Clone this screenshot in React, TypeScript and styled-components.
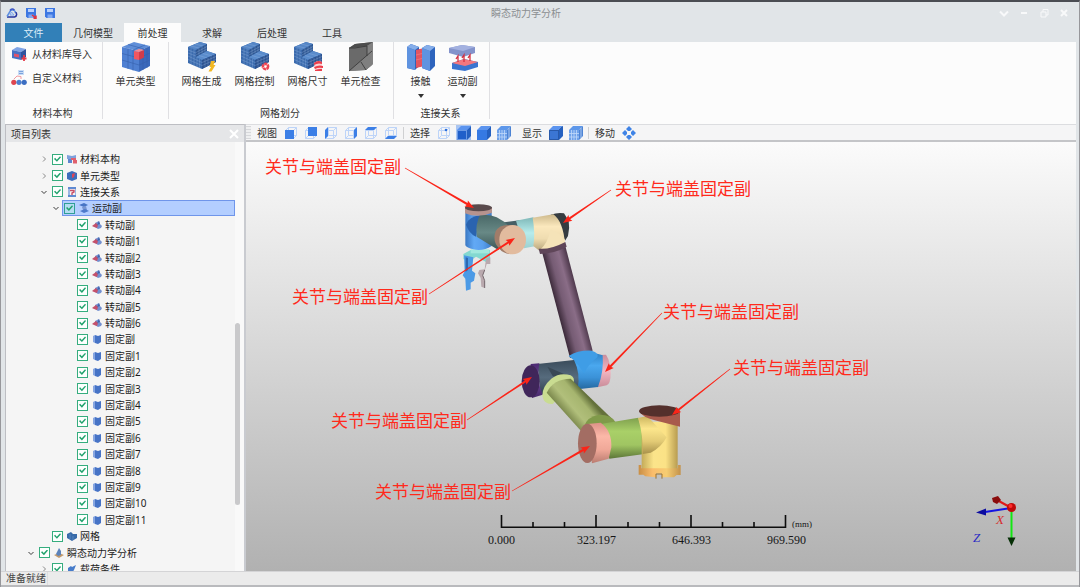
import React from "react";
import styled, { createGlobalStyle, css } from "styled-components";

const GlobalStyle = createGlobalStyle`
  * { box-sizing: border-box; }
  html, body, #root { height: 100%; margin: 0; }
  body {
    font-family: "Noto Sans", "Noto Sans CJK SC", sans-serif;
    font-size: 10px;
    line-height: 12px;
    color: #333;
    overflow: hidden;
  }
  button {
    font: inherit;
    color: inherit;
    border: 0;
    padding: 0;
    background: none;
  }
`;

const Window = styled.div`
  display: flex;
  flex-direction: column;
  height: 100%;
  background: #e1e5e8;
  border-top: 2px solid #4b4d53;
  border-left: 1px solid #97979b;
  border-right: 1px solid #97979b;
`;

const TitleBar = styled.header`
  display: grid;
  grid-template-columns: 1fr auto 1fr;
  align-items: center;
  height: 21px;
  padding: 0 5px;
`;

const QuickActions = styled.div`
  display: flex;
  gap: 7px;
`;

const WindowTitle = styled.h1`
  margin: 0 0 0 -28px;
  font-size: 10px;
  font-weight: 400;
  color: #8b8e91;
`;

const WindowControls = styled.div`
  display: flex;
  justify-content: flex-end;
`;

const IconButton = styled.button<{ $width?: number }>`
  display: grid;
  place-items: center;
  width: ${(p) => p.$width ?? 12}px;
  height: 12px;
`;

const Tabs = styled.nav`
  display: flex;
  gap: 2px;
  height: 19px;
  padding: 0 4px;
`;

const Tab = styled.button<{ $kind?: "file" | "active" }>`
  width: ${(p) => (p.$kind ? 57 : 58)}px;
  ${(p) => p.$kind === "file" && css`background: #3280b8; color: #dcecf7;`}
  ${(p) => p.$kind === "active" && css`background: #fcfcfc;`}
`;

const Ribbon = styled.section`
  display: flex;
  height: 82px;
  margin: 0 3px 0 4px;
  background: #fcfcfc;
`;

const Group = styled.div<{ $width: number }>`
  display: flex;
  flex-direction: column;
  width: ${(p) => p.$width}px;
  height: 77px;
  border-right: 1px solid #e0e0e3;
`;

const GroupTools = styled.div<{ $stacked?: boolean }>`
  display: flex;
  flex: 1;
  justify-content: center;
  align-items: flex-start;
  ${(p) => p.$stacked && css`
    flex-direction: column;
    justify-content: flex-start;
    padding-left: 6px;
  `}
`;

const GroupName = styled.div`
  padding-right: 2px;
  text-align: center;
`;

const SmallTool = styled.button`
  display: flex;
  align-items: center;
  gap: 5px;
  height: 24px;
`;

const BigTool = styled.button<{ $narrow?: boolean }>`
  display: flex;
  flex-direction: column;
  align-items: center;
  gap: 3px;
  width: ${(p) => (p.$narrow ? 42 : 53)}px;
`;

const DropArrow = styled.span`
  margin-top: 4px;
  border: 3px solid transparent;
  border-top: 4px solid #333;
  border-bottom: 0;
`;

const Main = styled.main`
  display: flex;
  flex: 1;
  min-height: 0;
  margin: 0 3px 0 4px;
`;

const Sidebar = styled.aside`
  display: flex;
  flex-direction: column;
  width: 241px;
  border: 1px solid #bdbec3;
  border-bottom: 0;
  border-right: 2px solid #c9cbd0;
  background: #f5f5f5;
`;

const SidebarHeader = styled.div`
  display: flex;
  justify-content: space-between;
  align-items: center;
  height: 17px;
  padding: 0 4px 0 5px;
  background: #e5e6e8;
`;

const TreeArea = styled.div`
  display: flex;
  flex: 1;
  min-height: 0;
  overflow: hidden;
`;

const Tree = styled.ul`
  display: flex;
  flex: 1;
  flex-direction: column;
  margin: 9px 0 -6px;
  padding: 0;
  list-style: none;
`;

const indents = [20, 33, 45, 58];

const TreeRow = styled.li<{ $level: number }>`
  display: flex;
  flex: 1;
  align-items: center;
  gap: 3px;
  min-height: 16px;
  padding-left: ${(p) => indents[p.$level]}px;
`;

const Twisty = styled.button`
  display: grid;
  place-items: center;
  width: 8px;
  height: 10px;
`;

const Check = styled.input`
  appearance: none;
  display: grid;
  place-items: center;
  flex: none;
  width: 11px;
  height: 11px;
  margin: 0 4px 0 0;
  border: 1px solid #35ad7e;
  background: #fdfffe;
  &:checked::after {
    content: "";
    width: 7px;
    height: 6px;
    background: #21a26d;
    clip-path: polygon(0 45%, 16% 28%, 40% 58%, 86% 0, 100% 16%, 42% 94%);
  }
`;

const TreeLabel = styled.label<{ $selected?: boolean }>`
  display: flex;
  flex: 1;
  align-items: center;
  height: 16px;
  padding-left: 1px;
  border: 1px solid transparent;
  color: #1c1c1c;
  svg { margin-right: 3px; }
  ${(p) => p.$selected && css`
    background: #b3ceff;
    border-color: #6f95ea;
    ${Check} { background: #b4dcf2; border-color: #2f9f96; }
  `}
`;

const ScrollTrack = styled.div`
  display: flex;
  flex-direction: column;
  width: 9px;
  background: #f9f9f9;
`;

const TrackSpace = styled.div<{ $share: number }>`
  flex: ${(p) => p.$share};
`;

const ScrollThumb = styled.div`
  flex: 182;
  width: 5px;
  border-radius: 3px;
  background: #c9c9cb;
`;

const Workspace = styled.section`
  display: flex;
  flex: 1;
  flex-direction: column;
  min-width: 0;
`;

const ViewToolbar = styled.div`
  display: flex;
  align-items: center;
  height: 18px;
  background: #f5f5f6;
  border-top: 1px solid #dcdde0;
  border-bottom: 2px solid #c4c5c8;
`;

const Grip = styled.span`
  width: 5px;
  height: 13px;
  margin-right: 6px;
  background: repeating-linear-gradient(#d6d7da 0 1px, #eeeff0 1px 3px);
`;

const ToolCaption = styled.span`
  margin-right: 6px;
`;

const ToolSet = styled.div<{ $after: number }>`
  display: flex;
  gap: 5px;
  margin-right: ${(p) => p.$after}px;
`;

const ViewButton = styled.button<{ $on?: boolean }>`
  display: grid;
  place-items: center;
  width: 15px;
  height: 15px;
  ${(p) => p.$on && css`background: #a9c5f2;`}
`;

const Divider = styled.span`
  width: 1px;
  height: 12px;
  margin-right: 6px;
  background: #cfd0d2;
`;

const Canvas = styled.div`
  flex: 1;
  min-height: 0;
  background: linear-gradient(#fbfbfb, #b1b1b1);
  svg { display: block; width: 100%; height: 100%; }
`;

const StatusBar = styled.footer`
  display: flex;
  height: 16px;
  padding: 0 5px;
  background: #ebebeb;
  border-top: 1px solid #d4d4d6;
  border-bottom: 2px solid #b9babd;
`;

const StatusText = styled.span`
  padding-right: 1px;
  border-right: 1px solid #dcdcde;
  color: #444;
  line-height: 13px;
`;

/* ---------- title bar icons ---------- */

const AppLogo = () => (
  <svg width="12" height="12" viewBox="0 0 12 12" fill="none" strokeWidth="1.5">
    <path d="M1 10H8.5A2.6 2.6 0 0 0 9 5" stroke="#25349f" />
    <path d="M1 9.5L4 4.5A3 3 0 0 1 9.5 5.5" stroke="#5d8fe0" />
    <path d="M4 8L5.5 5L8 8Z" stroke="#7aa6ee" strokeWidth="1" />
    <path d="M4 3.5Q6 .8 8.5 3.2" stroke="#3b55c4" />
  </svg>
);

const Disk = ({ mark }: { mark?: boolean }) => (
  <svg width="12" height="12" viewBox="0 0 12 12">
    <path d="M1 1H11V11H2.5L1 9.5Z" fill="#3d77e2" />
    <path d="M3 2H9V5H3Z" fill="#b9d1fa" />
    <path d="M3.5 7.5H8.5V11H3.5Z" fill="#7fa8f2" />
    {mark && <path d="M7 8L11 11M11 8.5V11.3H8.5" stroke="#e03440" strokeWidth="1.5" fill="none" />}
  </svg>
);

const controlPaths = [
  ["展开", "M1 3.5L5 7.5L9 3.5"],
  ["最小化", "M2 5H8"],
  ["还原", "M2 4H7V9H2ZM4 4V1.5H9V7H7"],
  ["关闭", "M2 2L8 8M8 2L2 8"],
];

const StrokeIcon = ({ d, color, width = 2 }: { d: string; color: string; width?: number }) => (
  <svg width="10" height="10" viewBox="0 0 10 10">
    <path d={d} fill="none" stroke={color} strokeWidth={width} />
  </svg>
);

/* ---------- ribbon icons ---------- */

const LibraryIcon = () => (
  <svg width="16" height="16" viewBox="0 0 16 16">
    <path d="M1 4L6 1L15 3L10 6Z" fill="#7fa4e6" />
    <path d="M1 4L10 6V14L1 12Z" fill="#4670c4" />
    <path d="M10 6L15 3V11L10 14Z" fill="#2f539f" />
    <path d="M3 7.5L8 8.5V11.5L3 10.5Z" fill="#e0526a" />
    <path d="M13 9V15M10.5 12.5H15.5" stroke="#e53c4b" strokeWidth="1.8" />
  </svg>
);

const CustomMaterialIcon = () => (
  <svg width="16" height="16" viewBox="0 0 16 16">
    <path d="M7 0H13V5H7Z" fill="#c9dcf5" />
    <path d="M8 1.5H12M8 3.5H12" stroke="#7ba3dd" />
    <path d="M3 9L6 6L10 6.5V9" stroke="#f09aa0" fill="none" />
    <circle cx="2.800" cy="12.300" r="2.600" fill="#de4650" />
    <circle cx="8" cy="12.300" r="2.600" fill="#4d80cf" />
    <circle cx="13.200" cy="12.300" r="2.600" fill="#3c6ec2" />
  </svg>
);

const ElementTypeIcon = () => (
  <svg width="30" height="30" viewBox="0 0 30 30">
    <path d="M1 5L13 0L29 4L18 9Z" fill="#5f8ed8" />
    <path d="M1 5L18 9V30L1 25Z" fill="#4f80d2" />
    <path d="M18 9L29 4V24L18 30Z" fill="#3b69bb" />
    <path d="M7 6.500V27M12 8V28.500M1 11.500L18 16M1 18L18 23M22 7V28M26 5.500V26M18 16L29 11M18 23L29 18M7 2.500L23 7M12 8L24 3" stroke="#3660ab" strokeWidth=".6" fill="none" />
    <path d="M13 9L18 10V18L13 17Z" fill="#f2565f" />
    <path d="M18 10L23 8V15.500L18 18Z" fill="#d23c4a" />
    <path d="M13 9L18 7L23 8L18 10Z" fill="#f78a90" />
  </svg>
);

const MeshIcon = ({ badge }: { badge: "bolt" | "gear" | "size" }) => (
  <svg width="30" height="30" viewBox="0 0 30 30">
    <path d="M1 5L13 0L20 2V9L29 12V20L15 27L1 21Z" fill="#3a6aad" />
    <path d="M1 5L13 0L20 2L9 8Z" fill="#5586c6" />
    <path d="M9 8L20 2V9L9 15Z" fill="#2e5793" />
    <path d="M9 15L20 9L29 12L15 18Z" fill="#5a8ccc" />
    <path d="M15 18L29 12V20L15 27Z" fill="#2b5290" />
    <path d="M4 6V22M7 7V24M10 15V25M12.500 17V26M1 8L9 11M1 11L9 14M1 14L15 20.500M1 17.500L15 23.500M18 17V25.500M21 16V24M24 14.500V22.500M27 13V21M15 20.500L29 14.500M15 23.500L29 17.500M12 6.500V13M15 5V11.500M18 3.500V10M9 10.500L20 4.500M9 13L20 7M4 4L12 6M8 2L16 4M12 13.500L20 16M16 11.500L25 14" stroke="#9dbce6" strokeWidth=".5" fill="none" opacity=".6" />
    {badge === "bolt" && <path d="M24 19H28L26.500 23H28.500L24.500 29.500H21.500L24 25H22.500Z" fill="#f2b824" />}
    {badge === "gear" && <circle cx="25.500" cy="24.500" r="2.600" fill="#fff" stroke="#ee4552" strokeWidth="2.600" strokeDasharray="3 .5" />}
    {badge === "size" && (
      <>
        <path d="M21 21Q25 17.500 29 20V29H22Z" fill="#fbd3d5" />
        <path d="M21 21Q25 17.500 29 20V22Q25 20.500 21 23ZM21 25Q26 22.500 30 24V26Q25 25 22 27ZM22 28Q26 26.500 29 27V29H22Z" fill="#ec3f4c" />
      </>
    )}
  </svg>
);

const ElementCheckIcon = () => (
  <svg width="30" height="30" viewBox="0 0 30 30">
    <path d="M3 6L9 2L27 0V22L20 28L3 29Z" fill="#6a6a6a" />
    <path d="M3 6L21 4L27 0L9 2Z" fill="#4d4d4d" />
    <path d="M21 4L27 0V22L21 27Z" fill="#828282" />
    <path d="M3 29L24 11L26 23L20 28Z" fill="#7f7f7f" />
    <path d="M3 29L26 9M15 20L20 28M3 6H9L21 4V14" stroke="#3b3b3b" fill="none" strokeWidth=".9" />
  </svg>
);

const ContactIcon = () => (
  <svg width="30" height="30" viewBox="0 0 30 30">
    <path d="M1 5L5 2L13 5V24L9 28L1 26Z" fill="#2e64bd" />
    <path d="M1 5L9 8V28L1 26Z" fill="#5f93e0" />
    <path d="M1 5L5 2L13 5L9 8Z" fill="#86aeea" />
    <path d="M10 8L18 6V24L10 26Z" fill="#d94150" />
    <path d="M11 8V25M13 8V25M15 7V24M10 13L18 11M10 18L18 16" stroke="#f27d83" strokeWidth=".7" />
    <path d="M16 6L21 3L29 5V24L24 29L16 26Z" fill="#2e64bd" />
    <path d="M16 6L24 9V29L16 26Z" fill="#5f93e0" />
    <path d="M16 6L21 3L29 5L24 9Z" fill="#86aeea" />
  </svg>
);

const JointIcon = () => (
  <svg width="30" height="30" viewBox="0 0 30 30">
    <path d="M1 6L14 3L27 5V11L15 15L1 11Z" fill="#8493cb" />
    <path d="M1 6L14 3L27 5L15 9Z" fill="#a3b1e0" />
    <path d="M4 21L16 17L30 20V25L17 29L4 27Z" fill="#3a74d0" />
    <path d="M4 21L16 17L30 20L17 24Z" fill="#f2777e" />
    <path d="M10 20V14L8 17M16 20V13L14 16M22 19V13L20 16" stroke="#d53040" strokeWidth="1.300" fill="none" />
  </svg>
);

/* ---------- tree icons ---------- */

type TreeIconKind = "material" | "element" | "link" | "joint" | "rotate" | "fixed" | "mesh" | "analysis" | "load";

const treeIcons: Record<TreeIconKind, React.ReactNode> = {
  material: <><path d="M0 1L5 2L9 1V5H0Z" fill="#7ea1dc" /><path d="M1 5H5V9H1Z" fill="#5d86cf" /><path d="M4 4H9V6H4ZM6 6H10V9.500H6Z" fill="#e0606e" /></>,
  element: <><path d="M0 2L5 0L10 2V8L5 10L0 8Z" fill="#3e6dbb" /><path d="M5 3L8 2L7 6L5 7Z" fill="#de4556" /></>,
  link: <><path d="M1 0H9V2H1ZM1 8H9V10H1Z" fill="#5f8ad2" /><path d="M1 2H3V8H1ZM8 2H9V8H8Z" fill="#9db7e2" /><path d="M3 3.500H7V5L5 6V8" stroke="#c85069" strokeWidth="1.400" fill="none" /></>,
  joint: <><path d="M0 2L5 0L9 2L5 4Z" fill="#4674c5" /><path d="M3 4L7 3L8 7H4Z" fill="#7895d0" /><path d="M1 8L6 6L10 8L5 10Z" fill="#4d7acb" /></>,
  rotate: <><path d="M3 3L7 1L8 4L10 6L9 8L6 9L3 7Z" fill="#7390d0" /><path d="M0 6L4 3L6 5L5 8L2 7Z" fill="#c4506b" /><path d="M7 1L8 4L5 5Z" fill="#3f63ad" /></>,
  fixed: <><path d="M1 2L3 1V9L1 8Z" fill="#87a6e1" /><path d="M3 1L6 2L9 1V8L6 10L3 9Z" fill="#4673c6" /></>,
  mesh: <><path d="M0 3L4 1L6 3L10 3V7L5 10L0 7Z" fill="#386aa9" /><path d="M3 3V8M6 5V9" stroke="#6a98d1" strokeWidth=".6" /></>,
  analysis: <><path d="M0 7L5 5L10 7L5 10Z" fill="#c29a6b" /><path d="M2 6L5 0L7 3V7L4 8Z" fill="#5c83bb" /></>,
  load: <path d="M1 4L4 2L5 3L9 1L7 6L5 9L1 10Z" fill="#477cca" />,
};

const TreeIcon = ({ kind }: { kind: TreeIconKind }) => (
  <svg width="10" height="10" viewBox="0 0 10 10">{treeIcons[kind]}</svg>
);

interface Node { level: number; text: string; icon: TreeIconKind; open?: boolean; selected?: boolean }

const nodes: Node[] = [
  { level: 1, text: "材料本构", icon: "material", open: false },
  { level: 1, text: "单元类型", icon: "element", open: false },
  { level: 1, text: "连接关系", icon: "link", open: true },
  { level: 2, text: "运动副", icon: "joint", open: true, selected: true },
  ...["", "1", "2", "3", "4", "5", "6"].map((n): Node => ({ level: 3, text: `转动副${n}`, icon: "rotate" })),
  ...["", "1", "2", "3", "4", "5", "6", "7", "8", "9", "10", "11"].map((n): Node => ({ level: 3, text: `固定副${n}`, icon: "fixed" })),
  { level: 1, text: "网格", icon: "mesh" },
  { level: 0, text: "瞬态动力学分析", icon: "analysis", open: true },
  { level: 1, text: "载荷条件", icon: "load", open: false },
];

/* ---------- view toolbar icons ---------- */

const faces: Record<string, string> = {
  前视: "M1 4H10V13H1Z",
  后视: "M4 1H13V10H4Z",
  左视: "M1 4L4 1V10L1 13Z",
  右视: "M10 4L13 1V10L10 13Z",
  俯视: "M1 4L4 1H13L10 4Z",
  仰视: "M1 13L4 10H13L10 13Z",
};

const WireCube = ({ face, dot }: { face?: string; dot?: boolean }) => (
  <svg width="14" height="14" viewBox="0 0 14 14">
    <path d="M1.500 4.500H9.500V12.500H1.500ZM4.500 1.500H12.500V9.500H4.500ZM1.500 4.500L4.500 1.500M9.500 4.500L12.500 1.500M9.500 12.500L12.500 9.500M1.500 12.500L4.500 9.500" fill="none" stroke="#bdd4f8" />
    {face && <path d={face} fill="#3c7fe6" />}
    {dot && <circle cx="9" cy="4" r="1.300" fill="#2d6fdc" />}
  </svg>
);

const SolidCube = ({ grid, dashed, edged }: { grid?: boolean; dashed?: boolean; edged?: boolean }) => (
  <svg width="14" height="14" viewBox="0 0 14 14">
    <path d="M0 4L4 0H14L10 4Z" fill={grid ? "#5d97ea" : "#5b94ef"} />
    <path d="M0 4H10V14H0Z" fill={grid ? "#6ea1ea" : dashed ? "#1f5fca" : edged ? "#3b76d4" : "#3579e3"} />
    <path d="M10 4L14 0V10L10 14Z" fill={grid ? "#4c83d4" : "#2460c0"} />
    {grid && <path d="M2.500 4V14M5 4V14M7.500 4V14M0 7.500H10M0 11H10M12 2V12" stroke="#c2d9fa" strokeWidth=".8" />}
    {dashed && <path d="M.5 4.500H9.500V13.500H.5Z" fill="none" stroke="#b5d2ff" strokeDasharray="1 1" />}
    {edged && <path d="M.5 4.500H9.500V13.500H.5ZM9.500 4.500L13.500 .5" fill="none" stroke="#2553a0" strokeWidth=".8" />}
  </svg>
);

const MoveIcon = () => (
  <svg width="14" height="14" viewBox="0 0 14 14" fill="#3f83e6">
    <path d="M7 0L10 3L8 5H6L4 3ZM7 14L10 11L8 9H6L4 11ZM0 7L3 4L5 6V8L3 10ZM14 7L11 4L9 6V8L11 10Z" />
  </svg>
);

/* ---------- scene ---------- */

const notes = [
  { x: 265, y: 173, from: [405, 168], to: [474, 208] },
  { x: 615, y: 195, from: [611, 190], to: [563, 223] },
  { x: 292, y: 303, from: [429, 294], to: [515, 238] },
  { x: 663, y: 318, from: [662, 313], to: [605, 372] },
  { x: 733, y: 374, from: [730, 369], to: [672, 415] },
  { x: 331, y: 427, from: [467, 420], to: [532, 377] },
  { x: 375, y: 498, from: [512, 491], to: [590, 446] },
];

const taperedArrow = ([x1, y1]: number[], [x2, y2]: number[]) => {
  const len = Math.hypot(x2 - x1, y2 - y1);
  const ux = (x2 - x1) / len;
  const uy = (y2 - y1) / len;
  const at = (back: number, side: number) =>
    `${(x2 - ux * back - uy * side).toFixed(1)},${(y2 - uy * back + ux * side).toFixed(1)}`;
  return [at(len, 0.3), at(8, 1), at(9, 3.4), at(0, 0), at(9, -3.4), at(8, -1), at(len, -0.3)].join(" ");
};

const Shade = ({ id, stops, x2 = 1, y2 = 0 }: { id: string; stops: string[]; x2?: number; y2?: number }) => (
  <linearGradient id={id} x1="0" y1="0" x2={x2} y2={y2}>
    {stops.map((c, i) => <stop key={i} offset={i / (stops.length - 1)} stopColor={c} />)}
  </linearGradient>
);

const Robot = () => (
  <>
    <defs>
      <Shade id="blueV" stops={["#3a78c4", "#62a9f5", "#5aa0ee", "#3d7cc8"]} />
      <Shade id="teal" stops={["#496867", "#688986", "#3c5656"]} x2={0} y2={1} />
      <Shade id="cyan" stops={["#7fb8b8", "#b7ecec", "#9dd0d0"]} x2={0} y2={1} />
      <Shade id="cream" stops={["#cdb98c", "#fbe8bd", "#efdcb0", "#b8a67c"]} x2={0} y2={1} />
      <linearGradient id="plum" gradientUnits="userSpaceOnUse" x1="275" y1="182" x2="345" y2="163">
        <stop offset="0" stopColor="#3f2d3d" /><stop offset=".3" stopColor="#765c74" />
        <stop offset=".65" stopColor="#8a6d87" /><stop offset="1" stopColor="#4b3649" />
      </linearGradient>
      <Shade id="sky" stops={["#2f83c8", "#4aa8ef", "#3b92d8", "#24679f"]} x2={0} y2={1} />
      <Shade id="slate" stops={["#3a4c5b", "#566b7d", "#33424f"]} x2={0} y2={1} />
      <linearGradient id="olive" gradientUnits="userSpaceOnUse" x1="150" y1="515" x2="220" y2="455">
        <stop offset="0" stopColor="#6f7c42" /><stop offset=".4" stopColor="#b1bf7b" />
        <stop offset=".75" stopColor="#a6b56f" /><stop offset="1" stopColor="#64713b" />
      </linearGradient>
      <Shade id="green" stops={["#7f9f4e", "#a9d068", "#a0c562", "#5c7638"]} x2={0} y2={1} />
      <Shade id="yellow" stops={["#c4ab59", "#fbe48a", "#fbe286", "#b89c50"]} />
      <Shade id="yellowH" stops={["#cbb55f", "#fce68c", "#e3cb75", "#a8914b"]} x2={0} y2={1} />
      <Shade id="orange" stops={["#c88e45", "#fbbd6c", "#f6cd72", "#c3924b"]} />
      <Shade id="pink" stops={["#dc9187", "#fcb8a8", "#f0a898", "#b97b70"]} x2={0} y2={1} />
      <Shade id="rose" stops={["#c98d9c", "#f2b6c2", "#c98c99"]} x2={0} y2={1} />
      <Shade id="violet" stops={["#4c2a72", "#704799", "#452768"]} x2={0} y2={1} />
    </defs>

    {/* forearm, wrist and gripper */}
    <g transform="translate(450 190) scale(.33333)">
      <path d="M40 192L62 180H120V205L108 216L78 200L70 206L40 208Z" fill="#83d8d0" />
      <path d="M62 178H118V190H62Z" fill="#a2e8de" />
      <path d="M42 196L70 202L66 242L76 250L72 272L62 278V298L48 302L46 266L38 256L44 244Z" fill="#4c9ae6" />
      <path d="M47 202L54 204V240L47 246Z" fill="#2d68b0" />
      <path d="M108 206L121 202V222H110L104 242L98 256L104 272V294L94 290L92 264L84 250L88 240L104 238Z" fill="#b9a9ae" />
      <path d="M104 240L98 256L104 272V294" stroke="#74686d" strokeWidth="3" fill="none" />
      <path d="M46 65H125V168Q100 184 70 178Q50 174 46 166Z" fill="url(#blueV)" />
      <path d="M48 104Q55 80 92 75L78 140Q58 132 48 104Z" fill="#2a63af" />
      <path d="M90 75Q120 72 140 82L180 106L145 180L80 140Q76 100 90 75Z" fill="url(#teal)" />
      <path d="M45 52V70Q85 86 126 68V52Z" fill="#b6938e" />
      <ellipse cx="85.500" cy="53" rx="40.500" ry="10.500" fill="#594a4c" />
      <path d="M163 97L215 90V108L182 112Z" fill="#465f65" />
      <path d="M198 92L250 82L262 167L222 175Z" fill="url(#cyan)" />
      <path d="M302 74Q325 66 342 70L356 92Q360 115 354 138L345 152Q330 108 302 74Z" fill="#363c40" />
      <path d="M248 83L310 73Q340 95 345 163L268 182L250 168Q256 130 248 83Z" fill="url(#cream)" />
      <path d="M268 182Q294 160 302 118Q330 130 345 150V163Z" fill="#f5e3b8" />
      <path d="M188 106Q150 100 137 124Q126 155 148 176Q160 192 188 192Z" fill="#a17c69" />
      <ellipse cx="188" cy="149" rx="40" ry="44" fill="#e2bb9e" />
    </g>

    {/* upper arm link */}
    <g transform="translate(450 190) scale(.33333)">
      <path d="M275 182L345 164L428 482L360 504Z" fill="url(#plum)" />
      <path d="M266 176Q300 180 346 156L350 170Q315 190 270 192Z" fill="#5f4659" />
    </g>

    {/* elbow, lower arm and base */}
    <g transform="translate(510 240) scale(.33333)">
      <path d="M265 345L288 344Q302 365 302 400Q302 432 290 436L262 442Z" fill="url(#rose)" />
      <path d="M188 362L262 341L278 346Q282 395 264 441L203 448Z" fill="url(#sky)" />
      <path d="M176 348Q205 330 245 332Q268 338 262 352Q236 372 222 400L198 366Z" fill="#3f9de6" />
      <path d="M82 372L192 360Q212 400 203 447L92 464Z" fill="url(#slate)" />
      <path d="M112 380L190 414L178 434L128 408Z" fill="#394956" />
      <path d="M62 372L88 370Q78 418 98 464L66 474Z" fill="url(#violet)" />
      <ellipse cx="62" cy="424" rx="27" ry="48" fill="#40265a" />
      <path d="M128 492Q102 494 97 468Q96 440 124 416Q150 396 182 406Q196 414 190 430Z" fill="#c9dc91" />
      <path d="M110 458Q130 416 182 416L310 540L232 594Z" fill="url(#olive)" />
      <path d="M222 560Q230 530 268 524Q306 524 318 548L270 580Z" fill="#809a4a" />
      <path d="M272 552L385 533Q402 580 398 643L298 656Z" fill="url(#green)" />
      <path d="M395 545H503V700H395Z" fill="url(#yellow)" />
      <path d="M384 534L412 528L470 592Q452 624 422 638L398 642Q400 585 384 534Z" fill="url(#yellowH)" />
      <path d="M386 675H394V685H504V675H512V705H500L492 712H456V700H438V712L406 709L400 704H386Z" fill="url(#orange)" />
      <path d="M438 716V702H456V716" fill="none" stroke="#9b722f" strokeWidth="3" />
      <path d="M387 514Q400 535 440 542L510 560V514Z" fill="#a85a4c" />
      <ellipse cx="448" cy="513" rx="61" ry="17" fill="#54302c" />
      <path d="M232 552L272 548Q306 572 304 622L296 656L246 670Z" fill="url(#pink)" />
      <ellipse cx="232" cy="610" rx="28" ry="59" fill="#a36d63" />
    </g>
  </>
);

const NoteText = styled.text`
  font-family: "Noto Sans CJK SC", sans-serif;
  font-size: 17px;
  fill: #ff2a1c;
`;

const ScaleText = styled.text<{ $unit?: boolean }>`
  font-family: "Liberation Serif", serif;
  font-size: ${(p) => (p.$unit ? 9 : 12)}px;
  fill: #161616;
`;

const AxisText = styled.text`
  font-family: "Liberation Serif", serif;
  font-size: 13px;
  font-style: italic;
`;

const Scene = () => (
  <svg viewBox="246 142 830 429" role="img" aria-label="机械臂模型">
    <Robot />
    {notes.map((n, i) => (
      <g key={i}>
        <polygon points={taperedArrow(n.from, n.to)} fill="#fb2418" />
        <NoteText x={n.x} y={n.y}>关节与端盖固定副</NoteText>
      </g>
    ))}
    <path d="M501.500 515V527.300H785.500V515M596 515V527M691 515V527M533 522V527M564.500 522V527M628 522V527M659.500 522V527M722.500 522V527M754 522V527" fill="none" stroke="#0d0d0d" strokeWidth="1.600" />
    <ScaleText x="488" y="544">0.000</ScaleText>
    <ScaleText x="577" y="544">323.197</ScaleText>
    <ScaleText x="672" y="544">646.393</ScaleText>
    <ScaleText x="767" y="544">969.590</ScaleText>
    <ScaleText x="792" y="527" $unit>(mm)</ScaleText>
    <path d="M1011.500 508L997 500" stroke="#e01818" strokeWidth="2" />
    <path d="M992 498L998 496L1001 500L997 504L993 502Z" fill="#8a0c0c" />
    <path d="M1011 508L985 512" stroke="#1414e4" strokeWidth="2" />
    <path d="M976 512.500L986 508.500V515.500Z" fill="#0b0ba0" />
    <path d="M1011.500 509V538" stroke="#12e612" strokeWidth="2" />
    <path d="M1007.500 537.500H1015.500L1011.500 546Z" fill="#062f06" />
    <circle cx="1011.500" cy="507.500" r="4.500" fill="#c00a0a" />
    <circle cx="1010.500" cy="506" r="2" fill="#ff2c2c" />
    <AxisText x="996" y="524" fill="#d62b2b">X</AxisText>
    <AxisText x="973" y="542" fill="#2b2bc4">Z</AxisText>
  </svg>
);

export default function App() {
  return (
    <>
      <GlobalStyle />
      <Window>
        <TitleBar>
          <QuickActions>
            <IconButton aria-label="主页"><AppLogo /></IconButton>
            <IconButton aria-label="另存为"><Disk mark /></IconButton>
            <IconButton aria-label="保存"><Disk /></IconButton>
          </QuickActions>
          <WindowTitle>瞬态动力学分析</WindowTitle>
          <WindowControls>
            {controlPaths.map(([name, d]) => (
              <IconButton key={name} aria-label={name} $width={20}>
                <StrokeIcon d={d} color="#f8f9fa" width={name === "还原" ? 1 : 2} />
              </IconButton>
            ))}
          </WindowControls>
        </TitleBar>

        <Tabs>
          <Tab $kind="file">文件</Tab>
          <Tab>几何模型</Tab>
          <Tab $kind="active">前处理</Tab>
          <Tab>求解</Tab>
          <Tab>后处理</Tab>
          <Tab>工具</Tab>
        </Tabs>

        <Ribbon>
          <Group $width={98}>
            <GroupTools $stacked>
              <SmallTool><LibraryIcon />从材料库导入</SmallTool>
              <SmallTool><CustomMaterialIcon />自定义材料</SmallTool>
            </GroupTools>
            <GroupName>材料本构</GroupName>
          </Group>
          <Group $width={66}>
            <GroupTools>
              <BigTool><ElementTypeIcon />单元类型</BigTool>
            </GroupTools>
          </Group>
          <Group $width={225}>
            <GroupTools>
              <BigTool><MeshIcon badge="bolt" />网格生成</BigTool>
              <BigTool><MeshIcon badge="gear" />网格控制</BigTool>
              <BigTool><MeshIcon badge="size" />网格尺寸</BigTool>
              <BigTool><ElementCheckIcon />单元检查</BigTool>
            </GroupTools>
            <GroupName>网格划分</GroupName>
          </Group>
          <Group $width={96}>
            <GroupTools>
              <BigTool $narrow><ContactIcon />接触<DropArrow /></BigTool>
              <BigTool $narrow><JointIcon />运动副<DropArrow /></BigTool>
            </GroupTools>
            <GroupName>连接关系</GroupName>
          </Group>
        </Ribbon>

        <Main>
          <Sidebar>
            <SidebarHeader>
              项目列表
              <IconButton aria-label="关闭列表"><StrokeIcon d="M1 1L9 9M9 1L1 9" color="#fff" /></IconButton>
            </SidebarHeader>
            <TreeArea>
              <Tree>
                {nodes.map((n) => (
                  <TreeRow key={n.text} $level={n.level}>
                    <Twisty aria-label={n.text} disabled={n.open === undefined}>
                      {n.open !== undefined && (
                        <StrokeIcon d={n.open ? "M2.500 4L5 6.500L7.500 4" : "M4 2.500L6.500 5L4 7.500"} color={n.open ? "#3c3c3c" : "#8a8a8a"} width={1} />
                      )}
                    </Twisty>
                    <TreeLabel $selected={n.selected}>
                      <Check type="checkbox" defaultChecked />
                      <TreeIcon kind={n.icon} />
                      {n.text}
                    </TreeLabel>
                  </TreeRow>
                ))}
              </Tree>
              <ScrollTrack>
                <TrackSpace $share={181} />
                <ScrollThumb />
                <TrackSpace $share={66} />
              </ScrollTrack>
            </TreeArea>
          </Sidebar>

          <Workspace>
            <ViewToolbar>
              <Grip />
              <ToolCaption>视图</ToolCaption>
              <ToolSet $after={5}>
                {Object.entries(faces).map(([name, d]) => (
                  <ViewButton key={name} aria-label={name}><WireCube face={d} /></ViewButton>
                ))}
              </ToolSet>
              <Divider />
              <ToolCaption>选择</ToolCaption>
              <ToolSet $after={11}>
                <ViewButton aria-label="选择点"><WireCube dot /></ViewButton>
                <ViewButton aria-label="选择面" $on><SolidCube dashed /></ViewButton>
                <ViewButton aria-label="选择体"><SolidCube /></ViewButton>
                <ViewButton aria-label="选择单元"><SolidCube grid /></ViewButton>
              </ToolSet>
              <ToolCaption>显示</ToolCaption>
              <ToolSet $after={5}>
                <ViewButton aria-label="实体显示"><SolidCube edged /></ViewButton>
                <ViewButton aria-label="网格显示"><SolidCube grid /></ViewButton>
              </ToolSet>
              <Divider />
              <ToolCaption>移动</ToolCaption>
              <ViewButton aria-label="平移"><MoveIcon /></ViewButton>
            </ViewToolbar>
            <Canvas><Scene /></Canvas>
          </Workspace>
        </Main>

        <StatusBar><StatusText>准备就绪</StatusText></StatusBar>
      </Window>
    </>
  );
}
